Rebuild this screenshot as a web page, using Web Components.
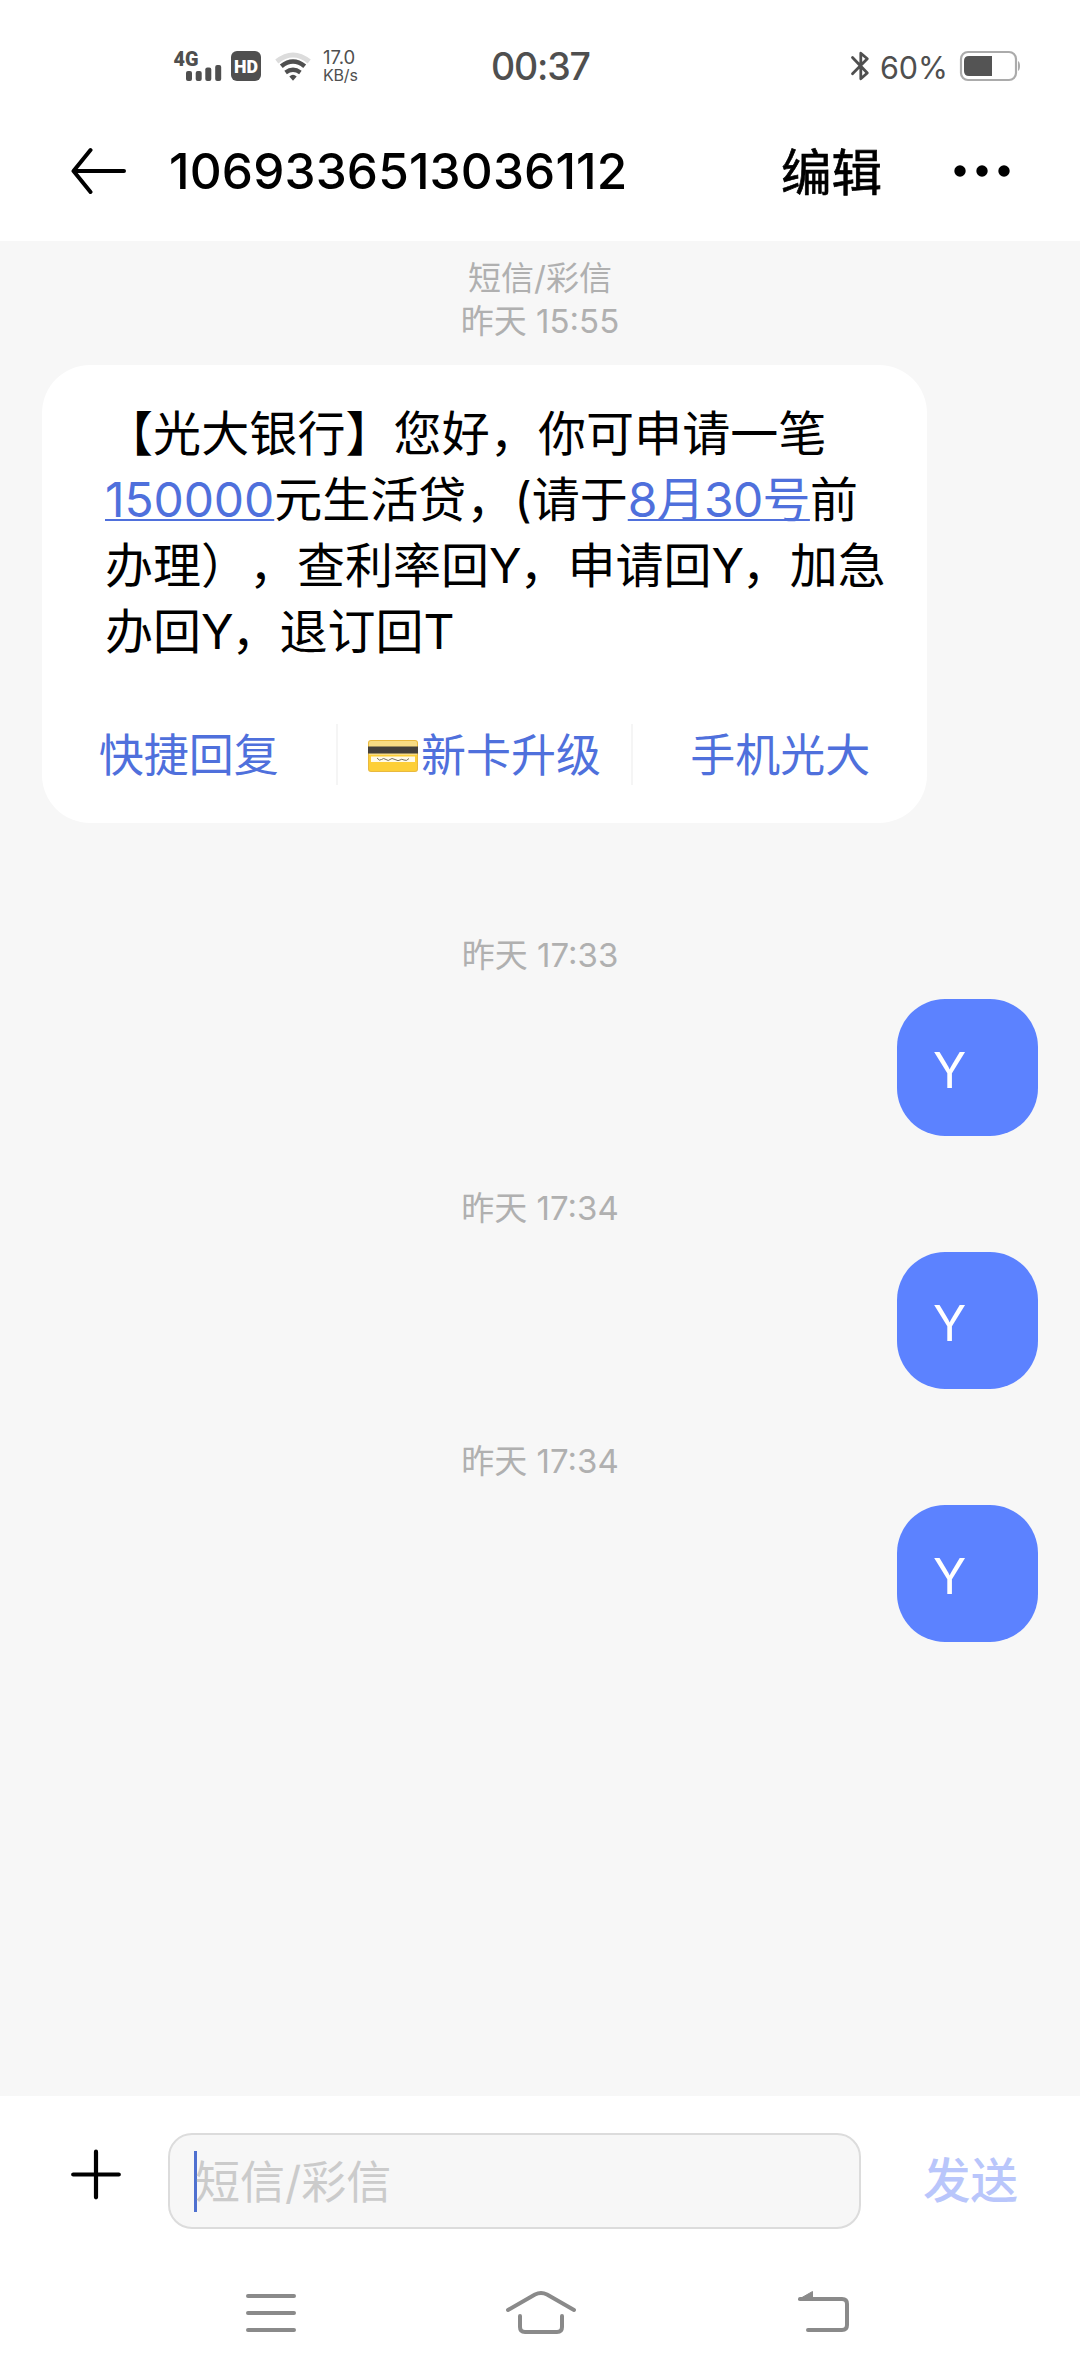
<!DOCTYPE html>
<html lang="zh-CN">
<head>
<meta charset="utf-8">
<meta name="viewport" content="width=1080">
<title>1069336513036112</title>
<style>
    html, body { margin: 0; padding: 0; }
    body {
        width: 1080px;
        height: 2376px;
        overflow: hidden;
        background: #fff;
        color: #000;
        font-family: Inter, "Noto Sans CJK SC", sans-serif;
        text-spacing-trim: space-all;
    }
    text-line span { letter-spacing: -2.2px; }
</style>
</head>
<body>
<message-screen>
    <status-bar slot="top" time="00:37" rate="17.0" battery="60"></status-bar>
    <chat-header slot="top" number="1069336513036112"></chat-header>

    <time-stamp>短信/彩信<br>昨天 15:55</time-stamp>
    <message-card>
        <text-line style="letter-spacing:0.1px">【光大银行】您好，你可申请一笔</text-line>
        <text-line><text-link style="letter-spacing:-0.1px">150000</text-link>元生活贷，(请于<text-link style="letter-spacing:-0.7px">8月30号</text-link>前</text-line>
        <text-line>办理），查利率回<span>Y</span>，申请回<span>Y</span>，加急</text-line>
        <text-line>办回<span>Y</span>，退订回T</text-line>
        <quick-reply slot="actions">快捷回复</quick-reply>
        <quick-reply slot="actions" card>新卡升级</quick-reply>
        <quick-reply slot="actions">手机光大</quick-reply>
    </message-card>

    <sent-message time="昨天 17:33">Y</sent-message>
    <sent-message time="昨天 17:34">Y</sent-message>
    <sent-message time="昨天 17:34">Y</sent-message>

    <message-composer slot="bottom" placeholder="短信/彩信"></message-composer>
    <nav-bar slot="bottom"></nav-bar>
</message-screen>

<script>
// Small helper: every component only differs in its markup
function define(name, render) {
    customElements.define(name, class extends HTMLElement {
        constructor() {
            super();
            this.attachShadow({ mode: 'open' });
        }
        connectedCallback() {
            this.shadowRoot.innerHTML = render(this);
        }
    });
}

// --- Screen frame: top bars, scrolling thread, bottom bars ---
define('message-screen', () => `
    <style>
        :host { display: flex; flex-direction: column; height: 2376px; }
        main { flex: 1; background: #f7f7f7; padding-top: 16px; box-sizing: border-box; min-height: 0; overflow: hidden; }
    </style>
    <slot name="top"></slot>
    <main><slot></slot></main>
    <slot name="bottom"></slot>
`);

// --- System status bar ---
define('status-bar', el => `
    <style>
        :host {
            display: flex; align-items: center; box-sizing: border-box;
            height: 101px; padding: 31px 59px 0 173px; color: #4f4f4f;
        }
        svg { display: block; flex: none; overflow: visible; }
        .rate { width: 40px; margin-left: 12px; }
        .rate div { height: 18px; line-height: 18px; white-space: nowrap; }
        .rate .num { font-size: 18.5px; }
        .rate .unit { font-size: 16px; letter-spacing: -0.2px; }
        .clock { margin-left: 128px; width: 110px; font-size: 37.5px; font-weight: 500; letter-spacing: -1.2px; white-space: nowrap; }
        .right { margin-left: auto; display: flex; align-items: center; }
        .pct { font-size: 30.5px; margin: 2px 11px 0 10px; }
    </style>
    <svg width="90" height="34" viewBox="173 49 90 34">
        <text x="173.5" y="65.5" font-family="Roboto" font-weight="900" font-size="20" textLength="25" lengthAdjust="spacingAndGlyphs" fill="#4f4f4f">4G</text>
        <g fill="#4f4f4f">
            <rect x="186" y="71" width="6" height="10" rx="2"/>
            <rect x="195.7" y="71" width="6" height="10" rx="2"/>
            <rect x="205.3" y="67.5" width="6" height="13.5" rx="2"/>
            <rect x="215.2" y="65" width="6" height="16" rx="2"/>
            <rect x="231" y="51" width="30" height="30" rx="6"/>
        </g>
        <text x="234" y="73" font-family="Roboto" font-weight="900" font-size="18.5" textLength="24" lengthAdjust="spacingAndGlyphs" fill="#fff">HD</text>
    </svg>
    <svg width="36" height="34" viewBox="275 49 36 34" style="margin-left:12px" fill="none" stroke-width="5">
        <path d="M276.8 61.5Q293 48.5 309.2 61.5" stroke="#dcdcdc"/>
        <path d="M281.3 66.2Q293 56.8 304.7 66.2" stroke="#4f4f4f" stroke-width="4.6"/>
        <path d="M285.6 72.5Q293 67 300.4 72.5" stroke="#4f4f4f" stroke-width="4.2"/>
        <path d="M289.3 76.5Q293 73.2 296.7 76.5L293 80.7Z" fill="#4f4f4f" stroke="none"/>
    </svg>
    <div class="rate"><div class="num">${el.getAttribute('rate')}</div><div class="unit">KB/s</div></div>
    <div class="clock">${el.getAttribute('time')}</div>
    <div class="right">
        <svg width="20" height="32" viewBox="850 50 20 32" fill="none" stroke="#4f4f4f" stroke-width="2.8" stroke-linejoin="round" stroke-linecap="round">
            <path d="M852.5 57.5L867.3 73L860.8 78.8V53.2L867.3 58.8L852.5 73.7"/>
        </svg>
        <div class="pct">${el.getAttribute('battery')}%</div>
        <svg width="62" height="32" viewBox="959 50 62 32">
            <rect x="961" y="52" width="55" height="28" rx="7" fill="none" stroke="#ababab" stroke-width="2.2"/>
            <path d="M992 56V76H969Q964 76 964 71V61Q964 56 969 56Z" fill="#545454"/>
            <path d="M1018 61Q1020 62 1020 66T1018 71Z" fill="#ababab"/>
        </svg>
    </div>
`);

// --- Conversation header ---
define('chat-header', el => `
    <style>
        :host { display: flex; align-items: center; height: 140px; padding: 0 69px 0 71px; }
        svg { display: block; flex: none; }
        h1 { margin: 0 auto 0 42px; font-size: 49.5px; font-weight: 500; line-height: 60px; letter-spacing: 0.15px; white-space: nowrap; }
        .edit { font-size: 50.5px; -webkit-text-stroke: 0.7px #000; line-height: 60px; margin: 4px 71px 0 0; }
    </style>
    <svg width="56" height="50" viewBox="71 147 56 50" fill="none" stroke="#000" stroke-width="4" stroke-linecap="round" stroke-linejoin="round">
        <path d="M90.5 151L73.5 172L90.5 193M75 172H124"/>
    </svg>
    <h1>${el.getAttribute('number')}</h1>
    <span class="edit">编辑</span>
    <svg width="58" height="14" viewBox="952 164 58 14">
        <circle cx="959" cy="171" r="5.7"/><circle cx="981" cy="171" r="5.7"/><circle cx="1003" cy="171" r="5.7"/>
    </svg>
`);

define('time-stamp', () => `
    <style>
        :host { display: block; font-size: 33px; line-height: 43px; text-align: center; color: #b0b0b0; }
    </style>
    <slot></slot>
`);

// --- Incoming card with reply shortcuts ---
define('message-card', () => `
    <style>
        :host {
            display: flex; flex-direction: column; box-sizing: border-box;
            width: 885px; height: 458px; margin: 22px 0 110px 42px;
            padding-top: 36px; border-radius: 48px; background: #fff;
        }
        .text { padding-left: 63px; }
        .actions { display: flex; margin-top: 59px; }
    </style>
    <div class="text"><slot></slot></div>
    <div class="actions"><slot name="actions"></slot></div>
`);

define('text-line', () => `
    <style>
        :host { display: block; height: 66px; line-height: 66px; font-size: 48px; white-space: nowrap; }
    </style>
    <slot></slot>
`);

// No whitespace around the slot, it would be underlined
define('text-link', () => `<style>
        :host {
            color: #4f70dc; text-decoration: underline; text-decoration-thickness: 2px;
            text-underline-offset: 2px; text-decoration-skip-ink: none;
        }
    </style><slot></slot>`);

define('quick-reply', el => `
    <style>
        :host {
            flex: 1; display: flex; align-items: center; justify-content: center; gap: 3px;
            height: 61px; font-size: 45px; line-height: 60px; color: #4f70dc; white-space: nowrap;
        }
        :host(:not(:last-of-type)) { border-right: 2px solid #f5f5f5; }
        svg { display: block; margin-top: 2px; }
        span { margin-top: 3px; }
    </style>
    ${el.hasAttribute('card') ? `
    <svg width="50" height="32" viewBox="0 0 50 32">
        <rect width="50" height="32" rx="3" fill="#e9b93f"/>
        <rect x="1" y="1" width="48" height="30" rx="2" fill="#fdcf37"/>
        <path d="M1 3Q1 1 3 1H47Q49 1 49 3V15H1Z" fill="#f8dc84"/>
        <rect y="6.5" width="50" height="7" fill="#44403a"/>
        <rect x="3" y="16.5" width="44" height="5.5" fill="#fffbea"/>
        <path d="M9 18q2.500 3.500 4.500 1.500t4.500 0t4 0t5 0t5 .5t4 0t5-1.500" fill="none" stroke="#77705f" stroke-width="1"/>
    </svg>` : ''}
    <span><slot></slot></span>
`);

// --- Outgoing message with its timestamp ---
define('sent-message', el => `
    <style>
        :host { display: flex; flex-direction: column; height: 253px; }
        time-stamp { position: relative; top: 1px; }
        .bubble {
            align-self: flex-end; box-sizing: border-box; width: 141px; height: 137px;
            margin: 23px 42px 0 0; padding: 39px 36px 0; border-radius: 48px;
            background: #5c82ff; color: #fff; font-size: 49px; line-height: 66px;
        }
    </style>
    <time-stamp>${el.getAttribute('time')}</time-stamp>
    <div class="bubble"><slot></slot></div>
`);

// --- Input row ---
define('message-composer', el => `
    <style>
        :host { display: flex; align-items: flex-start; box-sizing: border-box; height: 152px; padding: 37px 0 0 69px; background: #fff; }
        :host { margin-top: 0; background: #fff; height: 152px; }
        svg { display: block; margin: 15px 45px 0 0; }
        .field {
            display: flex; align-items: center; box-sizing: border-box; width: 693px; height: 96px;
            padding-left: 24px; border: 2px solid #dcdcdc; border-radius: 24px; background: #f7f7f7;
        }
        .caret { width: 3px; height: 61px; background: #4f70d0; margin-right: -2px; }
        .hint { margin-top: 3px; font-size: 45px; line-height: 60px; color: #cbcbcb; }
        .send { margin: 17px 0 0 62px; font-size: 47.5px; font-weight: 500; line-height: 62px; color: #b9c6fb; }
    </style>
    <svg width="54" height="54" viewBox="0 0 54 54" stroke="#000" stroke-width="4.2" stroke-linecap="round">
        <path d="M4.2 26.5H49.8M27 3.7V49.3"/>
    </svg>
    <div class="field"><span class="caret"></span><span class="hint">${el.getAttribute('placeholder')}</span></div>
    <span class="send">发送</span>
`);

// --- System navigation ---
define('nav-bar', () => `
    <style>
        :host { display: flex; height: 128px; padding-left: 244px; background: #fff; }
        svg { display: block; margin-top: 39px; fill: none; stroke: #8a8a8a; stroke-width: 4; stroke-linecap: round; stroke-linejoin: round; }
        .home { margin-left: 206px; }
        .back { margin-left: 218px; }
    </style>
    <svg width="54" height="50" viewBox="244 2287 54 50"><path d="M248 2296H294M248 2313H294M248 2330H294"/></svg>
    <svg class="home" width="74" height="50" viewBox="504 2287 74 50">
        <path d="M508 2310L535 2294.5Q541 2291.5 547 2294.5L574 2310M520 2316V2327Q520 2332 525 2332H557Q562 2332 562 2327V2316"/>
    </svg>
    <svg class="back" width="56" height="50" viewBox="796 2287 56 50">
        <path d="M800 2299H842Q847 2299 847 2304V2325Q847 2330 842 2330H808"/>
        <path d="M798.5 2299.5L812.5 2291.5V2300Z" fill="#8a8a8a" stroke-width="1"/>
    </svg>
`);
</script>
</body>
</html>
